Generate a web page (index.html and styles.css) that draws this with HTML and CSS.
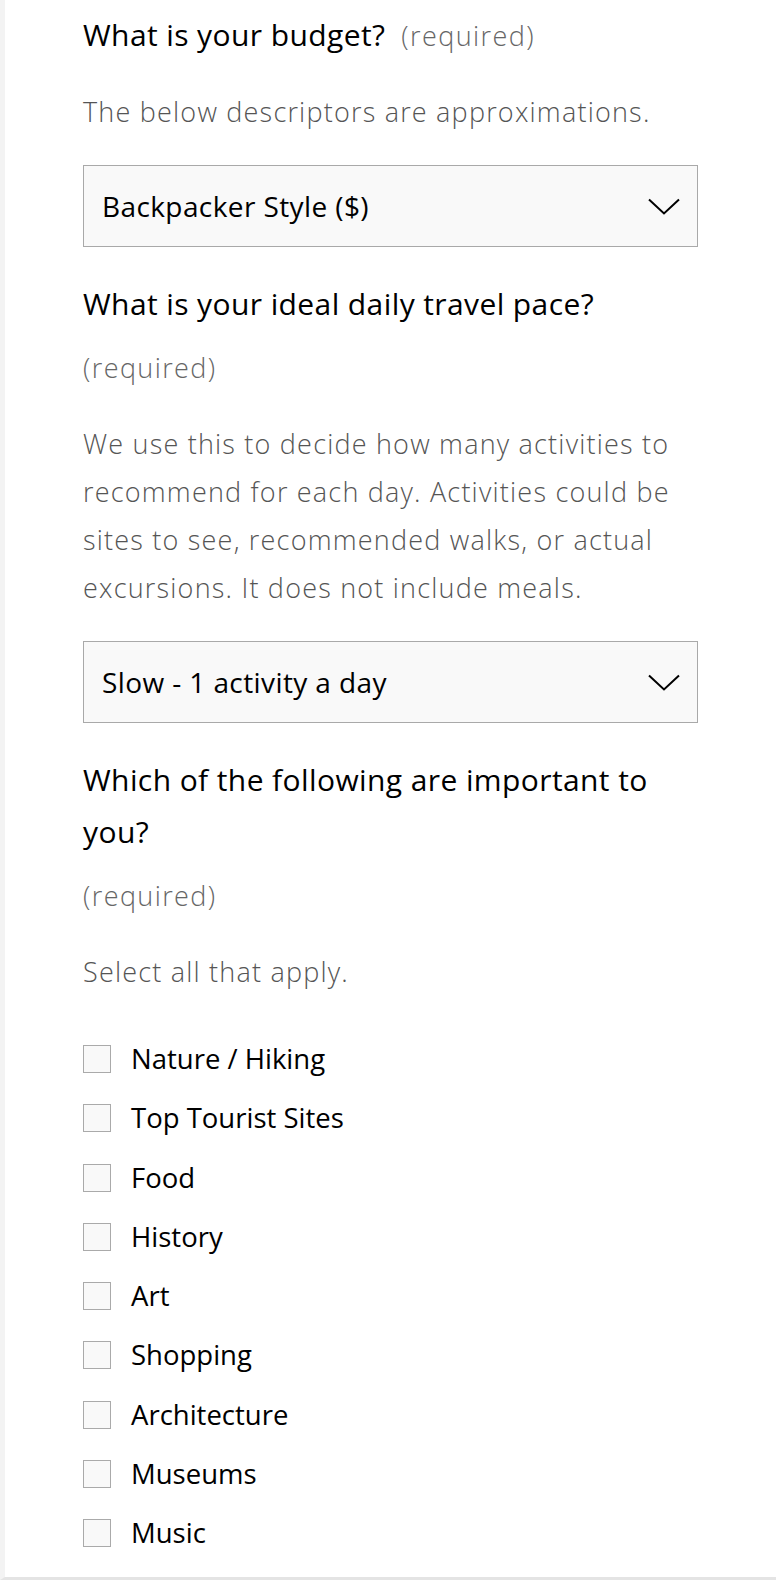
FILE: index.html
```html
<!DOCTYPE html>
<html lang="en">
<head>
<meta charset="utf-8">
<title>Trip form</title>
<link rel="stylesheet" href="styles.css">
</head>
<body>
<div class="page">
  <form class="form">
    <fieldset class="field">
      <div class="legend">
        <span class="title">What is your budget?</span>
        <span class="req">(required)</span>
      </div>
      <p class="desc">The below descriptors are approximations.</p>
      <div class="select">
        <span class="select-value">Backpacker Style ($)</span>
        <svg class="chev" width="32" height="17" viewBox="0 0 32 17"><path d="M1 1.5 L16 15.5 L31 1.5" fill="none" stroke="#000" stroke-width="2"/></svg>
      </div>
    </fieldset>

    <fieldset class="field">
      <div class="legend">
        <span class="title">What is your ideal daily travel pace?</span>
        <span class="req">(required)</span>
      </div>
      <p class="desc">We use this to decide how many activities to recommend for each day. Activities could be sites to see, recommended walks, or actual excursions. It does not include meals.</p>
      <div class="select">
        <span class="select-value">Slow - 1 activity a day</span>
        <svg class="chev" width="32" height="17" viewBox="0 0 32 17"><path d="M1 1.5 L16 15.5 L31 1.5" fill="none" stroke="#000" stroke-width="2"/></svg>
      </div>
    </fieldset>

    <fieldset class="field">
      <div class="legend">
        <span class="title">Which of the following are important to you?</span>
        <span class="req">(required)</span>
      </div>
      <p class="desc">Select all that apply.</p>
      <div class="options">
        <label class="option"><span class="box"></span><span class="opt-label">Nature / Hiking</span></label>
        <label class="option"><span class="box"></span><span class="opt-label">Top Tourist Sites</span></label>
        <label class="option"><span class="box"></span><span class="opt-label">Food</span></label>
        <label class="option"><span class="box"></span><span class="opt-label">History</span></label>
        <label class="option"><span class="box"></span><span class="opt-label">Art</span></label>
        <label class="option"><span class="box"></span><span class="opt-label">Shopping</span></label>
        <label class="option"><span class="box"></span><span class="opt-label">Architecture</span></label>
        <label class="option"><span class="box"></span><span class="opt-label">Museums</span></label>
        <label class="option"><span class="box"></span><span class="opt-label">Music</span></label>
      </div>
    </fieldset>
  </form>
</div>
</body>
</html>
```

FILE: styles.css
```css
html, body {
  margin: 0;
  padding: 0;
  background: #fff;
}
body {
  font-family: "Open Sans", "Liberation Sans", sans-serif;
  color: #000;
}
.page {
  box-sizing: border-box;
  height: 1580px;
  border-left: 5px solid #f3f3f3;
  border-bottom: 3px solid #e4e4e4;
  padding: 9px 0 0 78px;
}
.form {
  width: 615px;
}
.field {
  margin: 0;
  padding: 0;
  border: 0;
}
.legend {
  display: flex;
  flex-wrap: wrap;
  align-items: baseline;
  column-gap: 16px;
  row-gap: 12px;
}
.title {
  font-size: 30px;
  line-height: 52px;
  letter-spacing: 0.4px;
  color: #000;
}
.req {
  font-size: 27px;
  font-weight: 300;
  line-height: 52px;
  letter-spacing: 1.4px;
  color: #666;
}
.desc {
  margin: 26px 0 0;
  font-size: 27px;
  font-weight: 300;
  line-height: 48px;
  letter-spacing: 1.2px;
  color: #555;
}
.select {
  box-sizing: border-box;
  margin-top: 29px;
  height: 82px;
  border: 1px solid #a9a9a9;
  background: #f9f9f9;
  display: flex;
  align-items: center;
  justify-content: space-between;
  padding: 0 17px 0 18px;
}
.select-value {
  font-size: 28px;
  letter-spacing: 0.4px;
  color: #000;
}
.chev {
  display: block;
}
.field + .field {
  margin-top: 31px;
}
.options {
  margin-top: 45px;
  display: flex;
  flex-direction: column;
  row-gap: 23.25px;
}
.option {
  display: flex;
  align-items: center;
  height: 36px;
  column-gap: 20px;
}
.box {
  box-sizing: border-box;
  width: 28px;
  height: 28px;
  border: 1px solid #aaa;
  background: #f9f9f9;
  flex: none;
}
.opt-label {
  font-size: 27.5px;
  line-height: 36px;
  color: #000;
}
```
